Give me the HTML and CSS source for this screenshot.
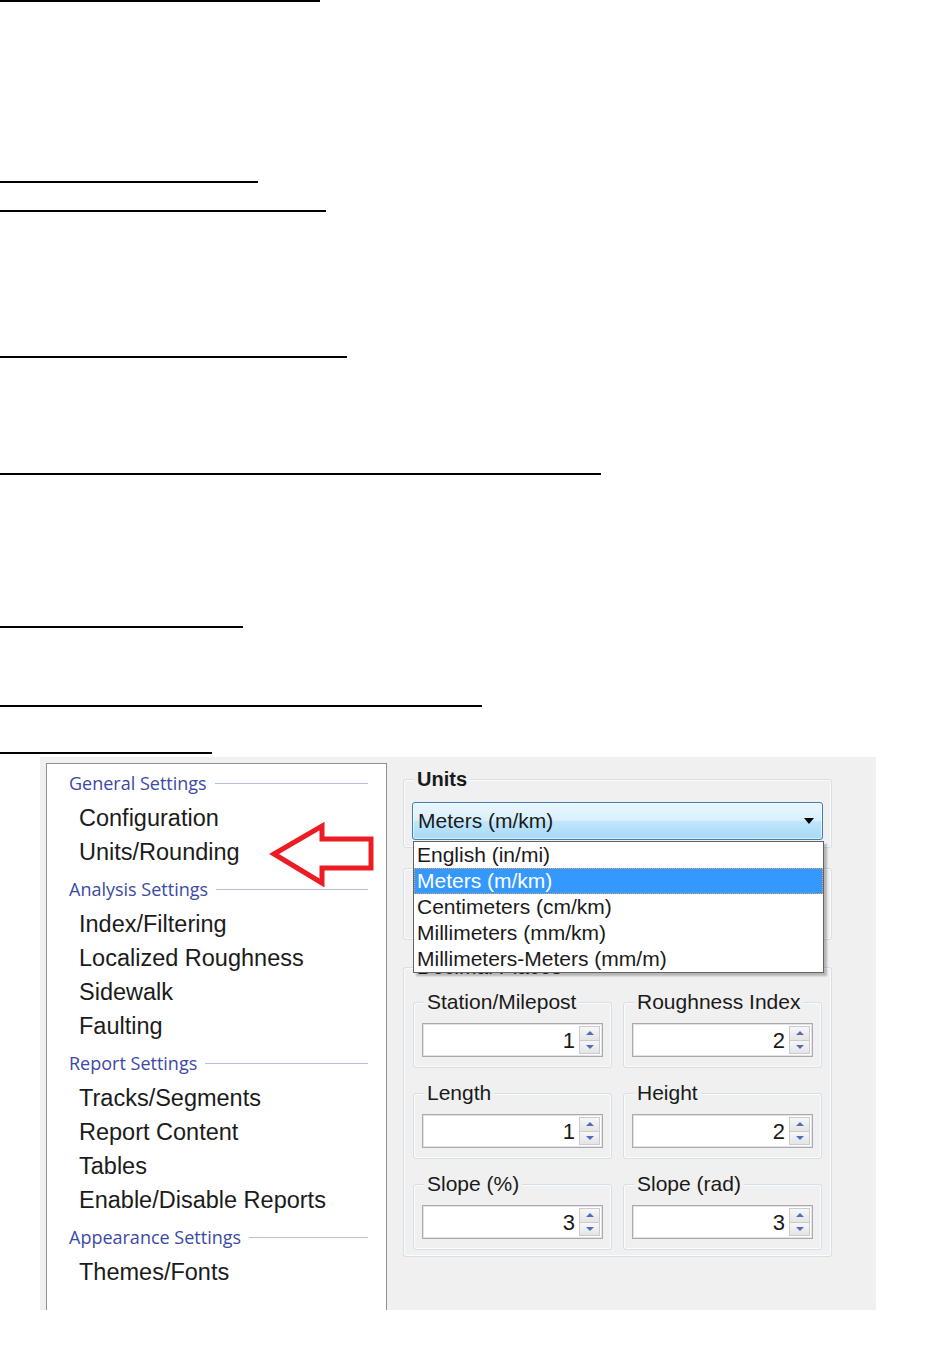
FILE: index.html
```html
<!DOCTYPE html>
<html lang="en">
<head>
<meta charset="utf-8">
<title>Units/Rounding settings</title>
<link rel="stylesheet" href="styles.css">
</head>
<body>
<div class="doc">
  <div class="rule r1"></div>
  <div class="rule r2"></div>
  <div class="rule r3"></div>
  <div class="rule r4"></div>
  <div class="rule r5"></div>
  <div class="rule r6"></div>
  <div class="rule r7"></div>
  <div class="rule r8"></div>

  <div class="panel">
    <div class="nav">
      <div class="nav-head">General Settings</div>
      <div class="nav-item">Configuration</div>
      <div class="nav-item">Units/Rounding</div>
      <div class="nav-head">Analysis Settings</div>
      <div class="nav-item">Index/Filtering</div>
      <div class="nav-item">Localized Roughness</div>
      <div class="nav-item">Sidewalk</div>
      <div class="nav-item">Faulting</div>
      <div class="nav-head">Report Settings</div>
      <div class="nav-item">Tracks/Segments</div>
      <div class="nav-item">Report Content</div>
      <div class="nav-item">Tables</div>
      <div class="nav-item">Enable/Disable Reports</div>
      <div class="nav-head">Appearance Settings</div>
      <div class="nav-item">Themes/Fonts</div>
      <svg class="arrow" width="112" height="72" viewBox="0 0 112 72">
        <polygon points="8,35 56,7 56,20 105,20 105,49 56,49 56,64" fill="none" stroke="#ec1c24" stroke-width="5"/>
      </svg>
    </div>

    <div class="settings">
      <div class="group g-units">
        <div class="group-title bold">Units</div>
        <div class="combo">
          <span class="combo-text">Meters (m/km)</span>
          <span class="caret"></span>
          <ul class="dropdown">
            <li>English (in/mi)</li>
            <li class="selected">Meters (m/km)</li>
            <li>Centimeters (cm/km)</li>
            <li>Millimeters (mm/km)</li>
            <li>Millimeters-Meters (mm/m)</li>
          </ul>
        </div>
      </div>

      <div class="group g-round"></div>

      <div class="group g-dec">
        <div class="group-title dec-title">Decimal Places</div>
        <div class="grid">
          <div class="group sub">
            <div class="group-title">Station/Milepost</div>
            <div class="spin"><span class="val">1</span><span class="btns"><span class="btn up"></span><span class="btn down"></span></span></div>
          </div>
          <div class="group sub">
            <div class="group-title">Roughness Index</div>
            <div class="spin"><span class="val">2</span><span class="btns"><span class="btn up"></span><span class="btn down"></span></span></div>
          </div>
          <div class="group sub">
            <div class="group-title">Length</div>
            <div class="spin"><span class="val">1</span><span class="btns"><span class="btn up"></span><span class="btn down"></span></span></div>
          </div>
          <div class="group sub">
            <div class="group-title">Height</div>
            <div class="spin"><span class="val">2</span><span class="btns"><span class="btn up"></span><span class="btn down"></span></span></div>
          </div>
          <div class="group sub">
            <div class="group-title">Slope (%)</div>
            <div class="spin"><span class="val">3</span><span class="btns"><span class="btn up"></span><span class="btn down"></span></span></div>
          </div>
          <div class="group sub">
            <div class="group-title">Slope (rad)</div>
            <div class="spin"><span class="val">3</span><span class="btns"><span class="btn up"></span><span class="btn down"></span></span></div>
          </div>
        </div>
      </div>
    </div>
  </div>
</div>
</body>
</html>
```

FILE: styles.css
```css
* { box-sizing: border-box; }

html, body {
  margin: 0;
  padding: 0;
  background: #ffffff;
}

body {
  font-family: "Liberation Sans", Arial, sans-serif;
  color: #1a1a1a;
}

.doc {
  width: 944px;
}

/* underline rules at the top of the page */
.rule {
  height: 2px;
  background: #000;
}
.r1 { width: 320px; margin-top: 0; }
.r2 { width: 258px; margin-top: 179px; }
.r3 { width: 326px; margin-top: 27px; }
.r4 { width: 347px; margin-top: 144px; }
.r5 { width: 601px; margin-top: 115px; }
.r6 { width: 243px; margin-top: 151px; }
.r7 { width: 482px; margin-top: 77px; }
.r8 { width: 212px; margin-top: 45px; }

/* settings dialog screenshot */
.panel {
  margin: 3px 0 0 40px;
  width: 836px;
  height: 553px;
  background: #f0f0f0;
  padding: 6px 0 0 6px;
  display: flex;
  align-items: flex-start;
}

.nav {
  position: relative;
  width: 341px;
  height: 547px;
  background: #fff;
  border: 1px solid #8e9094;
  border-bottom: none;
  padding: 0 18px 0 0;
}

.nav-head {
  display: flex;
  align-items: center;
  height: 38px;
  padding-left: 22px;
  font-family: "Open Sans", "Noto Sans", sans-serif;
  font-size: 18px;
  color: #3b49a6;
  white-space: nowrap;
}
.nav-head::after {
  content: "";
  flex: 1;
  height: 1px;
  margin-left: 8px;
  margin-top: 1px;
  background: #b4c0dc;
}

.nav-item {
  height: 34px;
  line-height: 33px;
  padding-left: 32px;
  font-size: 23.5px;
  color: #1b1b1b;
  white-space: nowrap;
}

.arrow {
  position: absolute;
  left: 219px;
  top: 55px;
}

.settings {
  width: 429px;
  margin-left: 16px;
  display: flex;
  flex-direction: column;
}

.group {
  border: 1px solid #d5dfe5;
  border-radius: 3px;
  box-shadow: inset 0 0 0 1px #fbfcfd;
}

.group-title {
  width: fit-content;
  margin: -13px 0 0 2px;
  padding: 0 3px;
  height: 24px;
  line-height: 24px;
  background: #f0f0f0;
  font-size: 21px;
  color: #1a1a1a;
  white-space: nowrap;
}
.group-title.bold {
  font-weight: bold;
  font-size: 20px;
}
.group-title.dec-title {
  margin-left: 1px;
}

.g-units {
  margin-top: 16px;
  padding: 0 8px 7px 8px;
}

.combo {
  position: relative;
  z-index: 2;
  margin-top: 11px;
  height: 38px;
  border: 1px solid #3c7fb1;
  border-radius: 3px;
  background: linear-gradient(to bottom, #eaf6fd 0%, #d9f0fc 48%, #bee6fd 52%, #a7d9f5 100%);
  box-shadow: inset 0 0 0 1px rgba(255,255,255,0.55);
  display: flex;
  align-items: center;
  padding: 0 7px 0 5px;
}
.combo-text {
  flex: 1;
  font-size: 21px;
  color: #1a1a1a;
}
.caret {
  width: 0;
  height: 0;
  border-left: 5px solid transparent;
  border-right: 5px solid transparent;
  border-top: 6px solid #000;
  margin-right: 1px;
}

.dropdown {
  position: absolute;
  left: 0;
  top: 38px;
  width: 411px;
  margin: 0;
  padding: 0;
  list-style: none;
  background: #fff;
  border: 1px solid #646464;
  box-shadow: 3px 3px 2px rgba(0,0,0,0.25);
}
.dropdown li {
  height: 26px;
  line-height: 26px;
  padding-left: 3px;
  font-size: 21px;
  color: #1a1a1a;
  white-space: nowrap;
}
.dropdown li.selected {
  background: #3399ff;
  color: #fff;
  outline: 1px dotted #f0a060;
  outline-offset: -1px;
}

.g-round {
  margin-top: 20px;
  height: 72px;
}

.g-dec {
  margin-top: 27px;
  padding: 0 9px 6px 9px;
}

.grid {
  margin-top: 23px;
  display: grid;
  grid-template-columns: 199px 199px;
  column-gap: 11px;
  row-gap: 25px;
}

.sub {
  height: 66px;
  padding: 0 8px;
}

.spin {
  margin-top: 9px;
  height: 34px;
  background: #fff;
  border: 1px solid #a9abb0;
  box-shadow: inset 0 0 0 1px #e2e3ea;
  display: flex;
  align-items: stretch;
  padding: 2px 2px 2px 0;
}
.val {
  flex: 1;
  text-align: right;
  padding-right: 4px;
  font-size: 22px;
  line-height: 30px;
  color: #1a1a1a;
}
.btns {
  width: 21px;
  display: flex;
  flex-direction: column;
}
.btn {
  flex: 1;
  border: 1px solid #c9cbcf;
  background: linear-gradient(to bottom, #f7f7f7, #e4e4e4);
  display: flex;
  align-items: center;
  justify-content: center;
}
.btn.up { border-bottom-width: 0; }
.btn::before {
  content: "";
  width: 0;
  height: 0;
  border-left: 4px solid transparent;
  border-right: 4px solid transparent;
}
.btn.up::before { border-bottom: 4px solid #4d6ec0; }
.btn.down::before { border-top: 4px solid #4d6ec0; }
```
